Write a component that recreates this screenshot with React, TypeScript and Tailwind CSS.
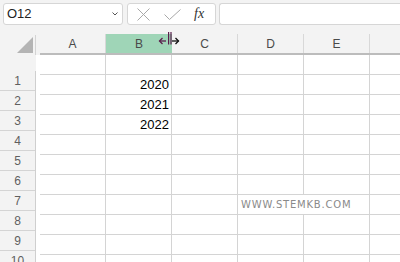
import React from "react"

const cols = ["A", "B", "C", "D", "E", "F"]
const rows = [1, 2, 3, 4, 5, 6, 7, 8, 9, 10]

const values: Record<string, string> = {
  "B1": "2020",
  "B2": "2021",
  "B3": "2022",
}

const font = { fontFamily: '"Liberation Sans", Arial, sans-serif' }

const ResizeCursor = () => (
  <svg className="absolute left-[157px] top-[3px]" width="24" height="15" viewBox="0 0 24 15">
    {/* left arrow */}
    <path d="M2.5 10 H9" stroke="#5b1e4c" strokeWidth="1.3" fill="none" />
    <path d="M5.5 7 L2.5 10 L5.5 13" stroke="#5b1e4c" strokeWidth="1.3" fill="none" />
    {/* split bars */}
    <rect x="11" y="1" width="1.2" height="12.5" fill="#5b1e4c" />
    <rect x="13.4" y="1" width="1.2" height="12.5" fill="#5b1e4c" />
    {/* right arrow */}
    <path d="M15 10 H21.5" stroke="#111" strokeWidth="1.3" fill="none" />
    <path d="M18.5 7 L21.5 10 L18.5 13" stroke="#111" strokeWidth="1.3" fill="none" />
  </svg>
)

const FormulaBar = () => (
  <div className="flex h-[28px] items-start gap-0 bg-[#f3f3f3] pt-[3px] pl-[3px]">
    {/* name box */}
    <div className="flex h-[22px] w-[120px] items-center justify-between rounded-[3px] border border-[#d6d6d6] bg-white pl-[3px] pr-[4px]">
      <span className="text-[13px] text-[#222]" style={font}>
        O12
      </span>
      <svg width="6" height="4" viewBox="0 0 6 4">
        <path d="M0.5 0.5 L3 3 L5.5 0.5" stroke="#555" strokeWidth="1" fill="none" />
      </svg>
    </div>
    {/* cancel / enter / fx */}
    <div className="ml-[4px] flex h-[22px] w-[89px] items-center rounded-[3px] border border-[#d6d6d6] bg-white">
      <svg className="ml-[9px]" width="13" height="13" viewBox="0 0 13 13">
        <path d="M0.5 0.5 L12.5 12.5 M12.5 0.5 L0.5 12.5" stroke="#a8a8a8" strokeWidth="1" fill="none" />
      </svg>
      <svg className="ml-[14px]" width="17" height="11" viewBox="0 0 17 11">
        <path d="M0.5 5.5 L5.5 10.5 L16.5 0.5" stroke="#a8a8a8" strokeWidth="1" fill="none" />
      </svg>
      <span
        className="ml-[13px] text-[14px] italic leading-none text-[#333]"
        style={{ fontFamily: '"Liberation Serif", "Times New Roman", serif' }}
      >
        fx
      </span>
    </div>
    {/* formula input */}
    <div className="ml-[3px] h-[22px] flex-1 rounded-l-[3px] border border-r-0 border-[#d6d6d6] bg-white" />
  </div>
)

const ColumnHeader = () => (
  <div className="relative flex h-[27px] items-end bg-[#f3f3f3]">
    <div className="flex h-[20px] w-[36px] items-end justify-end border-r border-[#d4d4d4] pb-[2px] pr-[2px]">
      <svg width="16" height="16" viewBox="0 0 16 16">
        <path d="M16 0 L16 16 L0 16 Z" fill="#b4b4b4" />
      </svg>
    </div>
    <div className="h-[25px] w-[4px] self-end" />
    <div className="flex flex-1 flex-col">
      <div className="flex">
        {cols.map((c) => (
          <div
            key={c}
            className={
              c === "B"
                ? "flex h-[19px] w-[66px] shrink-0 items-center justify-center bg-[#9fd5b7] text-[12px] text-[#4a4a4a]"
                : c === "F"
                  ? "flex h-[19px] w-[30px] shrink-0 items-center justify-center text-[12px] text-[#4a4a4a]"
                  : "flex h-[19px] w-[66px] shrink-0 items-center justify-center border-r border-[#d8d8d8] text-[12px] text-[#4a4a4a]"
            }
            style={font}
          >
            {c === "F" ? "" : c}
          </div>
        ))}
      </div>
      <div className="h-[2px] bg-[#bcbcbc]" />
    </div>
    <ResizeCursor />
  </div>
)

const RowHeaders = () => (
  <div className="flex w-[36px] shrink-0 flex-col bg-[#f3f3f3]">
    <div className="h-[16px] shrink-0" />
    <div className="flex flex-col border-r border-[#cfcfcf]">
      {rows.map((r) => (
        <div
          key={r}
          className="flex h-[20px] shrink-0 items-center justify-center border-b border-[#d4d4d4] text-[12px] text-[#5f5f5f]"
          style={font}
        >
          {r}
        </div>
      ))}
    </div>
  </div>
)

const Cells = () => (
  <div className="flex flex-1 flex-col pl-[4px]">
    <div className="flex h-[20px] shrink-0 border-b border-[#d4d4d4]">
      {cols.map((c) => (
        <div
          key={c}
          className={c === "F" ? "w-[30px] shrink-0" : "w-[66px] shrink-0 border-r border-[#d4d4d4]"}
        />
      ))}
    </div>
    {rows.map((r) => (
      <div key={r} className="flex h-[20px] shrink-0 border-b border-[#d4d4d4]">
        {cols.map((c) => {
          const value = values[`${c}${r}`]
          if (c === "D" && r === 7) {
            return (
              <div
                key={c}
                className="relative z-10 flex w-[66px] shrink-0 items-center overflow-visible whitespace-nowrap bg-white pl-[3px] text-[10px] tracking-[0.8px] text-[#8a8a8a]"
                style={{ fontFamily: '"DejaVu Sans", Verdana, sans-serif' }}
              >
                WWW.STEMKB.COM
              </div>
            )
          }
          return (
            <div
              key={c}
              className={
                c === "F"
                  ? "w-[30px] shrink-0"
                  : "flex w-[66px] shrink-0 items-center justify-end border-r border-[#d4d4d4] pr-[2px] text-[13px] text-black"
              }
              style={font}
            >
              {value}
            </div>
          )
        })}
      </div>
    ))}
  </div>
)

export default function App() {
  return (
    <div className="h-[262px] w-[400px] overflow-hidden bg-white">
      <FormulaBar />
      <ColumnHeader />
      <div className="flex">
        <RowHeaders />
        <Cells />
      </div>
    </div>
  )
}
